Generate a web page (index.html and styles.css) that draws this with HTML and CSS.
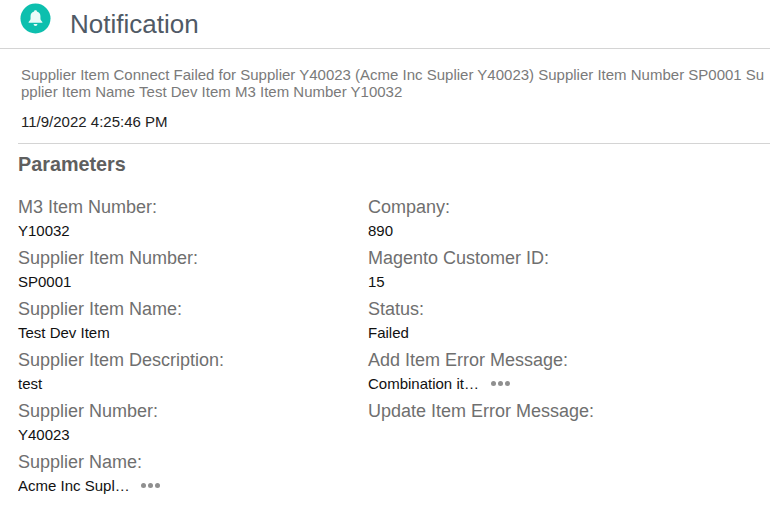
FILE: index.html
```html
<!DOCTYPE html>
<html lang="en">
<head>
<meta charset="utf-8">
<title>Notification</title>
<link rel="stylesheet" href="styles.css">
</head>
<body>
<header class="header">
  <span class="badge">
    <svg viewBox="0 0 32 32" width="31" height="31" aria-hidden="true">
      <circle cx="16" cy="16" r="15.5" fill="#0dbfae"/>
      <path d="M16 7.500c-.9 0-1.500.6-1.500 1.300-2.400.6-3.600 2.500-3.600 4.900v2.400c0 1.500-.8 2.500-2 3.400v1h14.200v-1c-1.200-.9-2-1.900-2-3.400v-2.400c0-2.400-1.200-4.300-3.600-4.900 0-.7-.6-1.300-1.500-1.300z" fill="#e9fbf8"/>
      <path d="M14 21.800a2 2 0 0 0 4 0z" fill="#e9fbf8"/>
    </svg>
  </span>
  <h1 class="title">Notification</h1>
</header>
<section class="message">
  <p class="message-text">Supplier Item Connect Failed for Supplier Y40023 (Acme Inc Suplier Y40023) Supplier Item Number SP0001 Supplier Item Name Test Dev Item M3 Item Number Y10032</p>
  <p class="timestamp">11/9/2022 4:25:46 PM</p>
</section>
<main class="params">
  <h2 class="params-title">Parameters</h2>
  <div class="grid">
    <div class="column">
      <div class="field"><div class="label">M3 Item Number:</div><div class="value">Y10032</div></div>
      <div class="field"><div class="label">Supplier Item Number:</div><div class="value">SP0001</div></div>
      <div class="field"><div class="label">Supplier Item Name:</div><div class="value">Test Dev Item</div></div>
      <div class="field"><div class="label">Supplier Item Description:</div><div class="value">test</div></div>
      <div class="field"><div class="label">Supplier Number:</div><div class="value">Y40023</div></div>
      <div class="field"><div class="label">Supplier Name:</div><div class="value value-more"><span class="clip">Acme Inc Suplier Y40023</span><span class="dots"><i></i><i></i><i></i></span></div></div>
    </div>
    <div class="column">
      <div class="field"><div class="label">Company:</div><div class="value">890</div></div>
      <div class="field"><div class="label">Magento Customer ID:</div><div class="value">15</div></div>
      <div class="field"><div class="label">Status:</div><div class="value">Failed</div></div>
      <div class="field"><div class="label">Add Item Error Message:</div><div class="value value-more"><span class="clip">Combination item error</span><span class="dots"><i></i><i></i><i></i></span></div></div>
      <div class="field"><div class="label">Update Item Error Message:</div></div>
    </div>
  </div>
</main>
</body>
</html>
```
FILE: styles.css
```css
* { box-sizing: border-box; }
html, body { margin: 0; padding: 0; }
body {
  width: 770px;
  height: 532px;
  overflow: hidden;
  background: #fff;
  font-family: "Liberation Sans", Arial, sans-serif;
}
.header {
  display: flex;
  align-items: flex-start;
  height: 49px;
  padding: 3px 0 0 20px;
  border-bottom: 1px solid #d4d4d4;
}
.badge { display: block; width: 31px; height: 31px; }
.badge svg { display: block; }
.title {
  margin: 5px 0 0 19px;
  font-size: 26px;
  line-height: 32px;
  font-weight: 400;
  color: #505a66;
}
.message { padding: 17px 0 0 21px; }
.message-text {
  margin: 0;
  width: 745px;
  font-size: 15px;
  line-height: 17px;
  color: #7a7a7a;
  word-break: break-all;
}
.timestamp {
  margin: 13px 0 0;
  font-size: 15px;
  line-height: 17px;
  color: #222;
}
.params {
  margin: 13px 0 0 18px;
  border-top: 1px solid #d4d4d4;
}
.params-title {
  margin: 9px 0 0;
  font-size: 19.800px;
  line-height: 23px;
  font-weight: 700;
  color: #5f5f5f;
}
.grid {
  display: grid;
  grid-template-columns: 350px 350px;
  margin-top: 20px;
}
.field { height: 51px; }
.label {
  font-size: 18px;
  line-height: 22px;
  color: #6f6f6f;
}
.value {
  margin-top: 4px;
  font-size: 15px;
  line-height: 17px;
  color: #111;
}
.value-more { display: flex; align-items: center; }
.clip {
  width: 112px;
  overflow: hidden;
  white-space: nowrap;
  text-overflow: ellipsis;
}
.dots { display: flex; gap: 2px; margin-left: 11px; }
.dots i {
  display: block;
  width: 5px;
  height: 5px;
  border-radius: 50%;
  background: #8f8f8f;
}
```
